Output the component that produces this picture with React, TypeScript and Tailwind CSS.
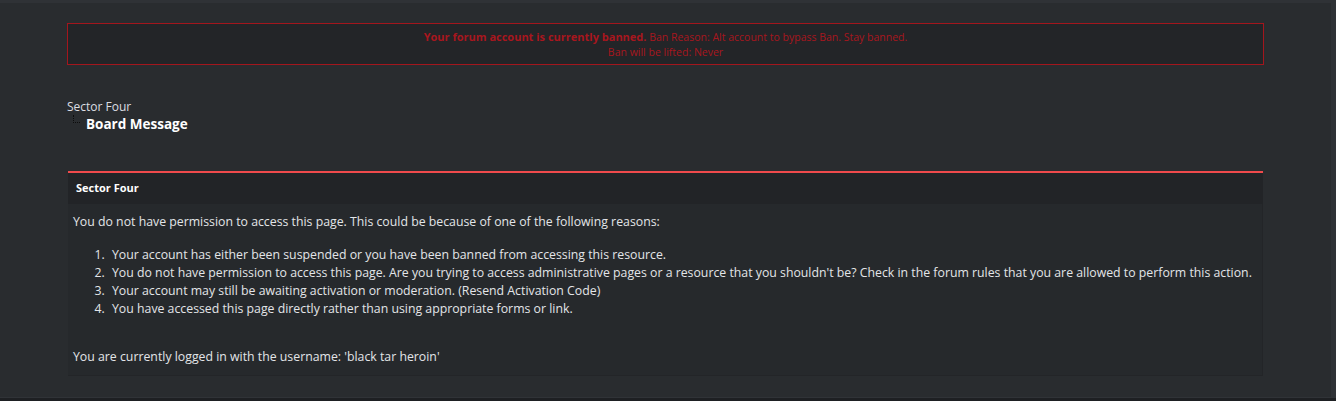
import React from "react";

const font = { fontFamily: '"Open Sans", "Liberation Sans", Arial, sans-serif' };

export default function App() {
  return (
    <div className="h-[401px] w-[1336px] overflow-hidden bg-[#1e2023] flex flex-col" style={font}>
      <div className="flex flex-1 min-h-0">
        <div className="flex-1 min-w-0 flex flex-col bg-[#292c2f] border-t-[3px] border-[#2f3236]">
          <div className="px-[67px] pt-[20px]">
            {/* banned notice */}
            <div className="h-[42px] border border-[#a3161d] bg-[#232528] flex flex-col items-center justify-center text-[10.5px] leading-[15px] text-[#a8161e]">
              <div>
                <span className="font-bold text-[11px]">Your forum account is currently banned.</span>{" "}
                Ban Reason: Alt account to bypass Ban. Stay banned.
              </div>
              <div>Ban will be lifted: Never</div>
            </div>

            {/* breadcrumb */}
            <div className="mt-[33px] text-[12px] leading-[17px] text-[#dcdee2]">Sector Four</div>
            <div className="flex items-start">
              <div className="ml-[6px] mt-[0px] w-[7px] h-[8px] border-l border-b border-dotted border-[#0c0c0c]" />
              <div className="ml-[6px] text-[13.5px] leading-[18px] font-bold text-white">Board Message</div>
            </div>

            {/* block */}
            <div className="mt-[38px] mx-[1px] border-t-2 border-[#f04a4c]">
              <div className="h-[31px] bg-[#222427] flex items-center px-[8px] text-[11px] font-bold text-white">
                Sector Four
              </div>
              <div className="bg-[#26292c] border-r border-b border-[#232528] px-[5px] pt-[9px] pb-[9px] text-[12.3px] leading-[18px] text-[#e3e5e8] whitespace-nowrap overflow-hidden">
                <div>You do not have permission to access this page. This could be because of one of the following reasons:</div>
                <ol className="list-decimal pl-[35px] mt-[15px]">
                  <li className="pl-[4px]">Your account has either been suspended or you have been banned from accessing this resource.</li>
                  <li className="pl-[4px]">You do not have permission to access this page. Are you trying to access administrative pages or a resource that you shouldn't be? Check in the forum rules that you are allowed to perform this action.</li>
                  <li className="pl-[4px]">Your account may still be awaiting activation or moderation. (Resend Activation Code)</li>
                  <li className="pl-[4px]">You have accessed this page directly rather than using appropriate forms or link.</li>
                </ol>
                <div className="mt-[30px]">You are currently logged in with the username: 'black tar heroin'</div>
              </div>
            </div>
          </div>
        </div>
        <div className="w-[5px] bg-[#2f3236]" />
      </div>
      <div className="h-[1px] bg-[#303337]" />
      <div className="h-[3px] bg-[#1e2023]" />
    </div>
  );
}
